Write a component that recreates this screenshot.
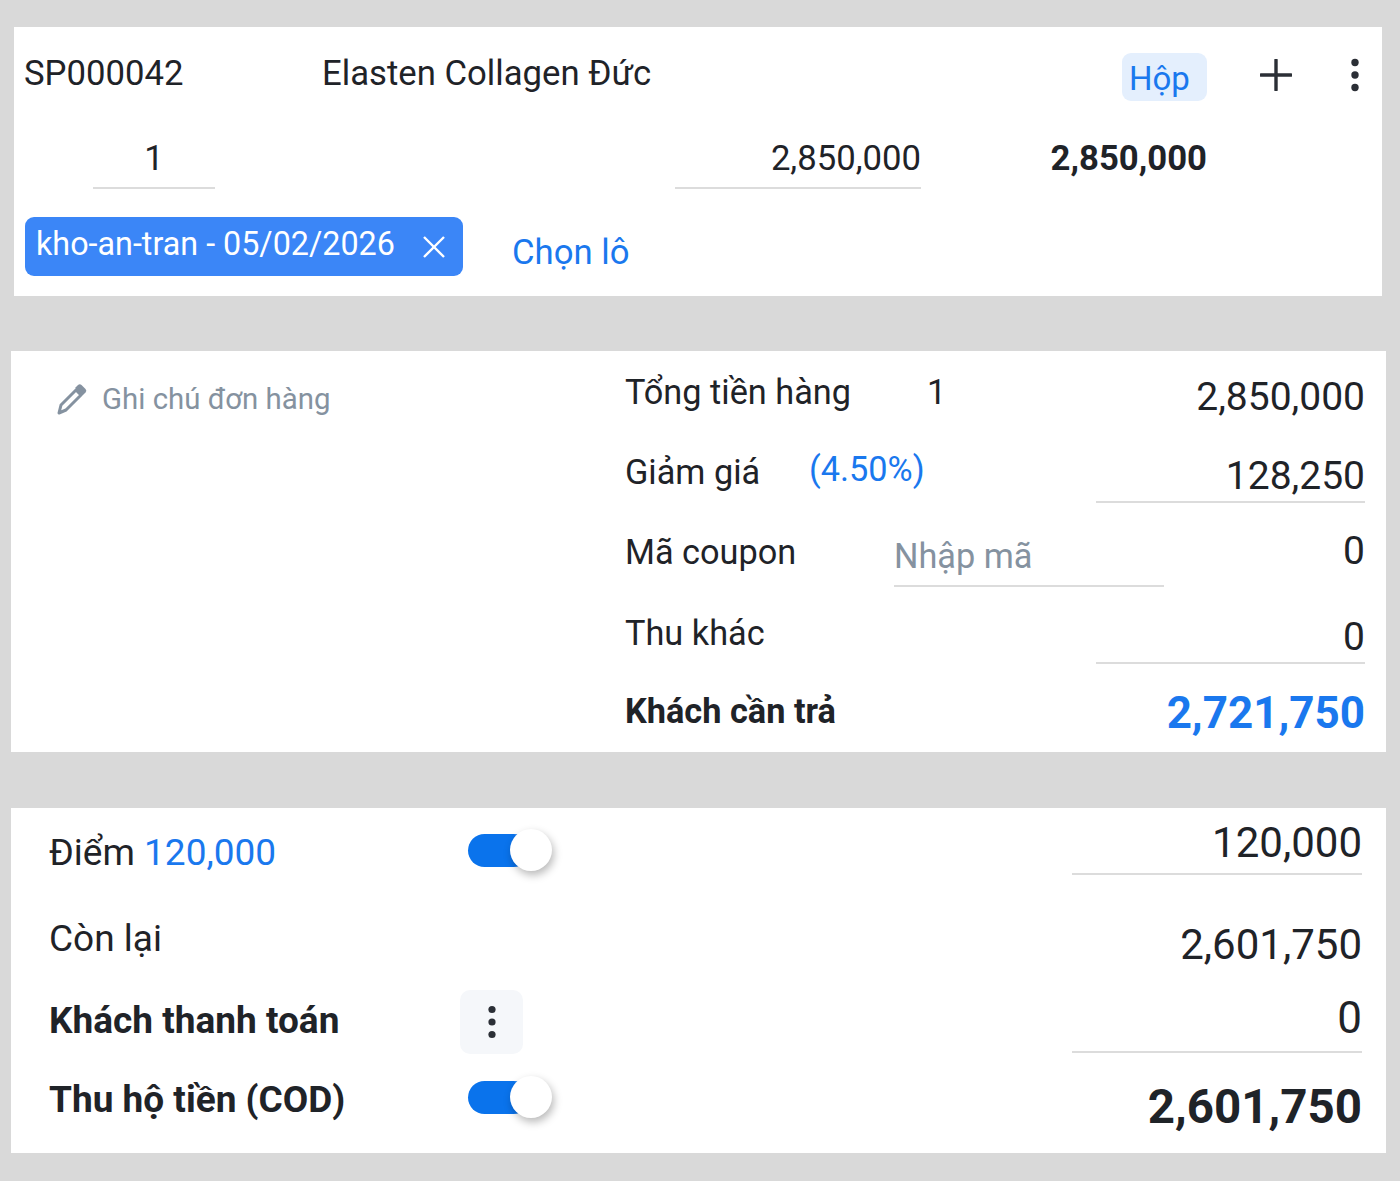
<div class="page">
  <section class="card item">
    <div class="row head">
      <span class="code">SP000042</span>
      <span class="name">Elasten Collagen Đức</span>
      <span class="unit">Hộp</span>
      <svg class="plus" viewBox="0 0 32 32" width="32" height="32"><path d="M16 1v30M1 16h30" stroke="#2b2f36" stroke-width="3.400" stroke-linecap="round" fill="none" /></svg>
      <svg class="dots" viewBox="0 0 10 34" width="10" height="34"><circle cx="5" cy="4.500" r="3.700" /><circle cx="5" cy="17" r="3.700" /><circle cx="5" cy="29.500" r="3.700" /></svg>
    </div>
    <div class="row qty">
      <span class="field count">1</span>
      <span class="field price">2,850,000</span>
      <b class="total">2,850,000</b>
    </div>
    <div class="row lots">
      <span class="chip">kho-an-tran - 05/02/2026
        <svg viewBox="0 0 24 24" width="24" height="24"><path d="M2 2l20 20M22 2L2 22" stroke="#fff" stroke-width="2.400" fill="none" /></svg>
      </span>
      <span class="pick">Chọn lô</span>
    </div>
  </section>

  <section class="card summary">
    <div class="note">
      <svg viewBox="0 0 32 32" width="32" height="32"><path d="M3 30l2-8L20 7l5 5L10 27z" fill="none" stroke="#8592a0" stroke-width="3" stroke-linejoin="round" /><path d="M19 5l3-3a2.500 2.500 0 0 1 3.500 0l4 4a2.500 2.500 0 0 1 0 3.500l-3 3z" fill="#8592a0" /></svg>
      <span>Ghi chú đơn hàng</span>
    </div>
    <div class="lines">
      <div class="line l1"><span class="lbl">Tổng tiền hàng</span><span>1</span><span class="val">2,850,000</span></div>
      <div class="line l2"><span class="lbl">Giảm giá</span><span class="pct">(4.50%)</span><span class="val under">128,250</span></div>
      <div class="line l3"><span class="lbl">Mã coupon</span><span class="coupon">Nhập mã</span><span class="val">0</span></div>
      <div class="line l4"><span class="lbl">Thu khác</span><span class="val under">0</span></div>
      <div class="line l5"><b class="lbl">Khách cần trả</b><b class="val pay">2,721,750</b></div>
    </div>
  </section>

  <section class="card pay-card">
    <div class="pline p1">
      <span class="plbl">Điểm <span class="blue">120,000</span></span>
      <span class="toggle"><i></i></span>
      <span class="pval under">120,000</span>
    </div>
    <div class="pline p2">
      <span class="plbl">Còn lại</span>
      <span class="pval">2,601,750</span>
    </div>
    <div class="pline p3">
      <b class="plbl">Khách thanh toán</b>
      <span class="more"><svg viewBox="0 0 10 34" width="10" height="34"><circle cx="5" cy="4.500" r="3.600" /><circle cx="5" cy="17" r="3.600" /><circle cx="5" cy="29.500" r="3.600" /></svg></span>
      <span class="pval under">0</span>
    </div>
    <div class="pline p4">
      <b class="plbl">Thu hộ tiền (COD)</b>
      <span class="toggle"><i></i></span>
      <b class="pval">2,601,750</b>
    </div>
  </section>
</div>

<style>
  :global(body) {
    background: #d9d9d9;
  }
  .page {
    height: 1181px;
    overflow: hidden;
    box-sizing: border-box;
    padding-top: 27px;
    font-family: Roboto, "Noto Sans", sans-serif;
    color: #1f2328;
    font-size: 34.7px;
  }
  .card {
    background: #fff;
    box-sizing: border-box;
  }
  .item {
    margin: 0 18px 55px 14px;
    height: 269px;
    padding-left: 10px;
  }
  .row {
    display: flex;
    align-items: center;
  }
  .head {
    height: 92px;
  }
  .code {
    width: 298px;
  }
  .name {
    flex: 1;
  }
  .unit {
    background: #e4effd;
    color: #1a78ee;
    border-radius: 9px;
    width: 85px;
    height: 48px;
    line-height: 51px;
    padding-left: 7px;
    box-sizing: border-box;
    margin-top: 8px;
    font-size: 33px;
  }
  .plus {
    margin: 4px 0 0 53px;
  }
  .dots {
    margin: 4px 22px 0 58px;
    fill: #2b2f36;
  }
  .qty {
    height: 70px;
  }
  .field {
    border-bottom: 2px solid #dcdcdc;
    height: 69px;
    line-height: 76px;
    box-sizing: border-box;
  }
  .count {
    margin-left: 69px;
    width: 122px;
    text-align: center;
  }
  .price {
    margin-left: 460px;
    width: 246px;
    text-align: right;
  }
  .total {
    width: 286px;
    text-align: right;
    font-weight: 700;
    padding-top: 8px;
  }
  .lots {
    margin-top: 28px;
  }
  .chip {
    margin-left: 1px;
    width: 438px;
    height: 59px;
    box-sizing: border-box;
    background: #3b86f7;
    color: #fff;
    border-radius: 9px;
    padding: 0 0 6px 11px;
    display: flex;
    align-items: center;
    justify-content: space-between;
    white-space: nowrap;
    font-size: 32.3px;
  }
  .chip svg {
    margin: 6px 17px 0 0;
  }
  .pick {
    margin: 10px 0 0 49px;
    color: #1a78ee;
  }
  .summary {
    margin: 0 14px 56px 11px;
    height: 401px;
    display: flex;
  }
  .note {
    flex: none;
    width: 614px;
    padding: 31px 0 0 45px;
    box-sizing: border-box;
    display: flex;
    align-items: flex-start;
    gap: 14px;
    color: #8592a0;
    font-size: 29.400px;
  }
  .note svg {
    margin-top: 1px;
  }
  .lines {
    flex: 1;
    min-width: 0;
    padding-right: 21px;
    font-size: 34.300px;
  }
  .line {
    display: flex;
    box-sizing: border-box;
    height: 81px;
    padding-top: 20px;
    align-items: flex-start;
    line-height: 41px;
  }
  .lbl {
    width: 302px;
  }
  .val {
    margin-left: auto;
    text-align: right;
    width: 269px;
    box-sizing: border-box;
    font-size: 39px;
    line-height: 46px;
  }
  .under {
    border-bottom: 2px solid #dcdcdc;
  }
  .l1 {
    height: 80px;
    padding-top: 21px;
  }
  .l1 .val {
    margin-top: 2px;
  }
  .l2 {
    padding-top: 21px;
  }
  .l2 .lbl {
    width: 184px;
  }
  .pct {
    color: #1a78ee;
    margin-top: -3px;
  }
  .l2 .val {
    margin-top: 1px;
    height: 50px;
  }
  .l3 .lbl {
    width: 269px;
  }
  .coupon {
    flex: none;
    color: #8592a0;
    border-bottom: 2px solid #dcdcdc;
    width: 270px;
    padding-top: 4px;
    height: 55px;
    box-sizing: border-box;
  }
  .l3 .val {
    width: auto;
    margin-top: -4px;
  }
  .l4 {
    height: 80px;
  }
  .l4 .val {
    margin-top: 1px;
    height: 50px;
  }
  .l5 {
    padding-top: 18px;
  }
  .pay {
    color: #1a78ee;
    font-size: 44px;
    line-height: 52px;
    margin-top: -4px;
  }
  .pay-card {
    margin: 0 14px 0 11px;
    height: 345px;
    padding: 0 24px 0 38px;
  }
  .pline {
    display: flex;
    align-items: flex-start;
    height: 84px;
    font-size: 37px;
  }
  .plbl {
    width: 419px;
    line-height: 44px;
  }
  .blue {
    color: #1a78ee;
  }
  .pval {
    margin-left: auto;
    width: 290px;
    text-align: right;
    font-size: 42px;
    line-height: 48px;
    box-sizing: border-box;
  }
  .toggle {
    width: 62px;
    height: 33px;
    border-radius: 17px;
    background: #0a73ec;
    position: relative;
  }
  .toggle i {
    position: absolute;
    left: 42px;
    top: -5px;
    width: 42px;
    height: 42px;
    border-radius: 50%;
    background: #fff;
    box-shadow: 2px 4px 8px rgba(0, 0, 0, 0.28);
  }
  .more {
    width: 63px;
    height: 64px;
    background: #f5f7fa;
    border-radius: 10px;
    margin: 14px 0 0 -8px;
    display: flex;
    align-items: center;
    justify-content: center;
    fill: #2b2f36;
  }
  .p1 .plbl {
    margin-top: 23px;
  }
  .p1 .toggle {
    margin-top: 26px;
  }
  .p1 .pval {
    margin-top: 11px;
    height: 56px;
  }
  .p2 .plbl {
    margin-top: 25px;
  }
  .p2 .pval {
    margin-top: 29px;
  }
  .p3 .plbl {
    margin-top: 23px;
  }
  .p3 .pval {
    margin-top: 18px;
    height: 59px;
    font-size: 44px;
  }
  .p4 {
    height: 93px;
  }
  .p4 .plbl {
    margin-top: 18px;
  }
  .p4 .toggle {
    margin-top: 21px;
  }
  .p4 .pval {
    margin-top: 19px;
    font-size: 47.500px;
    line-height: 56px;
  }
</style>
